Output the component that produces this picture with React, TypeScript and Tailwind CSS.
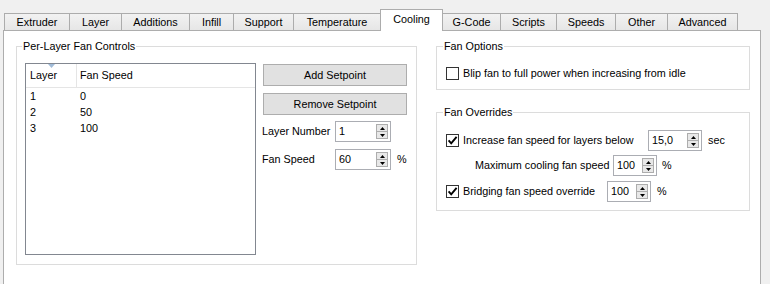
import React from "react";

const tabs = [
  { label: "Extruder", w: 65 },
  { label: "Layer", w: 52 },
  { label: "Additions", w: 68 },
  { label: "Infill", w: 44 },
  { label: "Support", w: 60 },
  { label: "Temperature", w: 87 },
  { label: "Cooling", w: 62 },
  { label: "G-Code", w: 58 },
  { label: "Scripts", w: 56 },
  { label: "Speeds", w: 59 },
  { label: "Other", w: 52 },
  { label: "Advanced", w: 70 },
];

const rows = [
  { layer: "1", speed: "0" },
  { layer: "2", speed: "50" },
  { layer: "3", speed: "100" },
];

function GroupBox({ title, className, titleLeft, children }: { title: string; className: string; titleLeft: string; children: React.ReactNode }) {
  return (
    <div className={`relative border border-[#dcdcdc] ${className}`}>
      <span className={`absolute top-[-7px] ${titleLeft} bg-white px-px leading-[13px]`}>{title}</span>
      {children}
    </div>
  );
}

function SpinBox({ value, w }: { value: string; w: string }) {
  return (
    <div className={`flex h-[21px] ${w} border border-[#abadb3] bg-white`}>
      <div className="flex flex-1 items-center pl-[3px] leading-none">{value}</div>
      <div className="my-[2px] mr-[2px] flex w-[12px] flex-col">
        <div className="flex flex-1 items-center justify-center border border-[#adadad] bg-[#e8e8e8]">
          <svg width="5" height="3" viewBox="0 0 5 3">
            <path d="M2.5 0 L5 3 L0 3 Z" fill="#000" />
          </svg>
        </div>
        <div className="-mt-px flex flex-1 items-center justify-center border border-[#adadad] bg-[#e8e8e8]">
          <svg width="5" height="3" viewBox="0 0 5 3">
            <path d="M0 0 L5 0 L2.5 3 Z" fill="#000" />
          </svg>
        </div>
      </div>
    </div>
  );
}

function CheckBox({ checked }: { checked?: boolean }) {
  return (
    <div className="flex h-[13px] w-[13px] shrink-0 items-center justify-center border border-[#333333] bg-white">
      {checked && (
        <svg width="11" height="11" viewBox="0 0 11 11">
          <path d="M1.6 5.4 L4.2 8.3 L9.6 1.8" fill="none" stroke="#000" strokeWidth="1.9" />
        </svg>
      )}
    </div>
  );
}

export default function App() {
  return (
    <div className="h-[284px] w-[770px] overflow-hidden bg-[#f0f0f0] font-['Liberation_Sans',Arial,sans-serif] text-[10.8px] text-black">
      {/* tab strip */}
      <div className="flex h-[21px] items-end pl-[4px] mt-[9px]">
        {tabs.map((t, i) => {
          const active = t.label === "Cooling";
          return (
            <div
              key={t.label}
              style={{ width: t.w + 1 }}
              className={`flex items-center justify-center border border-b-0 border-[#acacac] ${i > 0 ? "-ml-px" : ""} ${
                active
                  ? "relative z-10 -mb-px h-[22px] bg-white pb-[2px]"
                  : "h-[17px] bg-linear-to-b from-[#f2f2f2] to-[#e6e6e6]"
              }`}
            >
              {t.label}
            </div>
          );
        })}
      </div>

      {/* tab pane */}
      <div className="ml-[3px] h-[254px] w-[758px] border border-b-0 border-[#adadad] bg-white">
        <div className="flex pl-[12px] pt-[15px]">
          <GroupBox title="Per-Layer Fan Controls" titleLeft="left-[5px]" className="h-[219px] w-[401px]">
            <div className="flex pl-[8px] pt-[16px]">
              {/* list */}
              <div className="h-[192px] w-[231px] border border-[#828790]">
                <div className="flex h-[24px] border-b border-[#e5e5e5]">
                  <div className="relative flex w-[51px] items-center border-r border-[#e5e5e5] pl-[4px]">
                    <svg className="absolute left-[22px] top-0" width="7" height="4" viewBox="0 0 7 4">
                      <path d="M0 0 L7 0 L3.5 4 Z" fill="#a0bbd8" />
                    </svg>
                    Layer
                  </div>
                  <div className="flex items-center pl-[3px]">Fan Speed</div>
                </div>
                {rows.map((r) => (
                  <div key={r.layer} className="flex h-[16px] items-center">
                    <div className="w-[51px] pl-[4px]">{r.layer}</div>
                    <div className="pl-[3px]">{r.speed}</div>
                  </div>
                ))}
              </div>

              {/* buttons and fields */}
              <div className="ml-[7px] flex w-[144px] flex-col">
                <button className="mt-px flex h-[22px] items-center justify-center border border-[#adadad] bg-[#e1e1e1]">
                  Add Setpoint
                </button>
                <button className="mt-[7px] flex h-[22px] items-center justify-center border border-[#adadad] bg-[#e1e1e1]">
                  Remove Setpoint
                </button>
                <div className="-ml-px mt-[6px] flex items-center">
                  <span className="w-[73px]">Layer Number</span>
                  <SpinBox value="1" w="w-[56px]" />
                </div>
                <div className="-ml-px mt-[7px] flex items-center">
                  <span className="w-[73px]">Fan Speed</span>
                  <SpinBox value="60" w="w-[56px]" />
                  <span className="ml-[6px]">%</span>
                </div>
              </div>
            </div>
          </GroupBox>

          <div className="ml-[19px] flex w-[314px] flex-col">
            <GroupBox title="Fan Options" titleLeft="left-[6px]" className="h-[44px]">
              <div className="flex items-center pl-[9px] pt-[20px]">
                <CheckBox />
                <span className="ml-[4px] leading-[13px]">Blip fan to full power when increasing from idle</span>
              </div>
            </GroupBox>

            <GroupBox title="Fan Overrides" titleLeft="left-[6px]" className="mt-[22px] h-[99px]">
              <div className="flex flex-col pt-[17px]">
                <div className="flex items-center pl-[9px]">
                  <CheckBox checked />
                  <span className="ml-[4px] w-[185px]">Increase fan speed for layers below</span>
                  <SpinBox value="15,0" w="w-[54px]" />
                  <span className="ml-[6px]">sec</span>
                </div>
                <div className="mt-[4px] flex items-center pl-[38px]">
                  <span className="w-[138px]">Maximum cooling fan speed</span>
                  <SpinBox value="100" w="w-[44px]" />
                  <span className="ml-[5px]">%</span>
                </div>
                <div className="mt-[5px] flex items-center pl-[9px]">
                  <CheckBox checked />
                  <span className="ml-[4px] w-[144px]">Bridging fan speed override</span>
                  <SpinBox value="100" w="w-[44px]" />
                  <span className="ml-[6px]">%</span>
                </div>
              </div>
            </GroupBox>
          </div>
        </div>
      </div>
    </div>
  );
}
